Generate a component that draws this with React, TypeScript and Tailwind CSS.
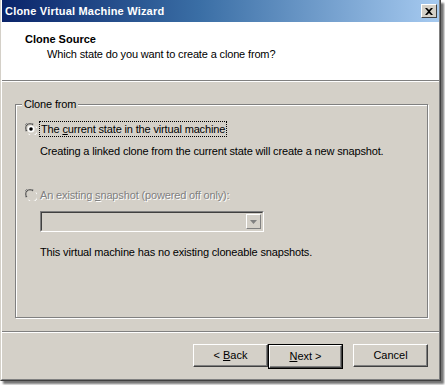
import React from "react";

function Radio({ checked, disabled }: { checked?: boolean; disabled?: boolean }) {
  return (
    <svg width="12" height="12" viewBox="0 0 12 12" className="shrink-0">
      <path d="M1 8.5 A5 5 0 0 1 8.5 1" stroke="#808080" strokeWidth="1" fill="none" />
      <path d="M2 8 A4 4 0 0 1 8 2" stroke="#404040" strokeWidth="1" fill="none" />
      <path d="M3.5 11 A5 5 0 0 0 11 3.5" stroke="#ffffff" strokeWidth="1" fill="none" />
      <path d="M4 10 A4 4 0 0 0 10 4" stroke="#d4d0c8" strokeWidth="1" fill="none" />
      <circle cx="6" cy="6" r="3.5" fill={disabled ? "#d4d0c8" : "#ffffff"} />
      {checked && <circle cx="6" cy="6" r="1.8" fill="#000000" />}
    </svg>
  );
}

function Face({ children, w }: { children: React.ReactNode; w: string }) {
  return (
    <div className={`${w} h-[23px] flex items-center justify-center bg-[#d4d0c8] border-t border-l border-white border-r border-b border-r-[#404040] border-b-[#404040] shadow-[inset_-1px_-1px_0_#808080] text-[11px] text-black`}>
      {children}
    </div>
  );
}

export default function App() {
  const font = { fontFamily: "Tahoma, 'Liberation Sans', Arial, sans-serif" };
  return (
    <div className="w-[445px] h-[385px] bg-white relative" style={font}>
      <div className="w-[441px] h-[381px] flex flex-col bg-[#d4d0c8] border-l border-[#d4d0c8] border-r border-b border-r-[#404040] border-b-[#404040] shadow-[3px_3px_2px_rgba(0,0,0,0.55)]">
        <div className="flex-1 flex flex-col border-l border-white border-r border-b border-r-[#808080] border-b-[#808080]">
          {/* Title bar */}
          <div className="h-[22px] flex items-center justify-between pl-[3px] pr-[2px] bg-[linear-gradient(to_right,#0a246a_0%,#3a6ea5_45%,#a6caf0_100%)]">
            <span className="text-white font-bold text-[11px] tracking-[0.2px]">Clone Virtual Machine Wizard</span>
            <div className="w-[16px] h-[14px] bg-[#d4d0c8] border-t border-l border-white border-r border-b border-r-[#404040] border-b-[#404040] flex items-center justify-center">
              <svg width="8" height="7" viewBox="0 0 8 7">
                <path d="M0 0 L2 0 L4 2 L6 0 L8 0 L5 3.5 L8 7 L6 7 L4 5 L2 7 L0 7 L3 3.5 Z" fill="#000" />
              </svg>
            </div>
          </div>
          {/* Header */}
          <div className="h-[58px] bg-white pt-[10px] pl-[23px]">
            <div className="text-[11px] font-bold text-black leading-[14px]">Clone Source</div>
            <div className="text-[11px] text-black leading-[14px] pl-[22px] mt-[1px] tracking-[-0.15px]">Which state do you want to create a clone from?</div>
          </div>
          <div className="h-[2px] border-t border-[#808080] border-b border-b-white" />
          {/* Body */}
          <div className="flex-1 flex flex-col pl-[13px] pr-[11px] pt-[22px]">
            <div className="relative h-[214px] border border-[#808080] shadow-[1px_1px_0_#ffffff,inset_1px_1px_0_#ffffff]">
              <div className="absolute -top-[8px] left-[6px] bg-[#d4d0c8] px-[2px] text-[11px] leading-[14px] text-black tracking-[-0.15px]">Clone from</div>
              <div className="pl-[9px] pt-[16px] flex flex-col">
                <div className="flex items-center gap-[2px] h-[16px]">
                  <Radio checked />
                  <span className="text-[11px] leading-[14px] text-black border border-dotted border-black px-[1px] tracking-[-0.15px]">
                    The <span className="underline">c</span>urrent state in the virtual machine
                  </span>
                </div>
                <div className="pl-[15px] mt-[7px] text-[11px] leading-[14px] text-black tracking-[-0.15px]">
                  Creating a linked clone from the current state will create a new snapshot.
                </div>
                <div className="flex items-center gap-[3px] h-[16px] mt-[29px]">
                  <Radio disabled />
                  <span className="text-[11px] leading-[13px] text-[#808080] [text-shadow:1px_1px_0_#ffffff] tracking-[-0.15px]">
                    An existing <span className="underline">s</span>napshot (powered off only):
                  </span>
                </div>
                <div className="ml-[15px] mt-[8px] w-[224px] h-[21px] flex items-stretch border-t border-l border-[#808080] border-r border-b border-r-white border-b-white">
                  <div className="flex-1 border-t border-l border-[#404040] border-r border-b border-r-[#d4d0c8] border-b-[#d4d0c8] flex justify-end p-[1px] bg-[#d4d0c8]">
                    <div className="w-[15px] h-full bg-[#d4d0c8] border-t border-l border-white border-r border-b border-r-[#808080] border-b-[#808080] flex items-center justify-center">
                      <svg width="7" height="4" viewBox="0 0 7 4">
                        <path d="M0 0 L7 0 L3.5 4 Z" fill="#808080" />
                      </svg>
                    </div>
                  </div>
                </div>
                <div className="pl-[15px] mt-[13px] text-[11px] leading-[14px] text-black tracking-[-0.15px]">
                  This virtual machine has no existing cloneable snapshots.
                </div>
              </div>
            </div>
            <div className="flex-1" />
          </div>
          <div className="h-[2px] border-t border-[#808080] border-b border-b-white" />
          <div className="h-[46px] flex items-start justify-end pr-[11px] pt-[11px]">
            <Face w="w-[75px]">
              &lt; <span className="underline ml-[3px]">B</span>ack
            </Face>
            <div className="border border-black">
              <Face w="w-[73px]">
                <span className="underline">N</span>ext &gt;
              </Face>
            </div>
            <div className="w-[10px]" />
            <Face w="w-[75px]">Cancel</Face>
          </div>
        </div>
      </div>
    </div>
  );
}
